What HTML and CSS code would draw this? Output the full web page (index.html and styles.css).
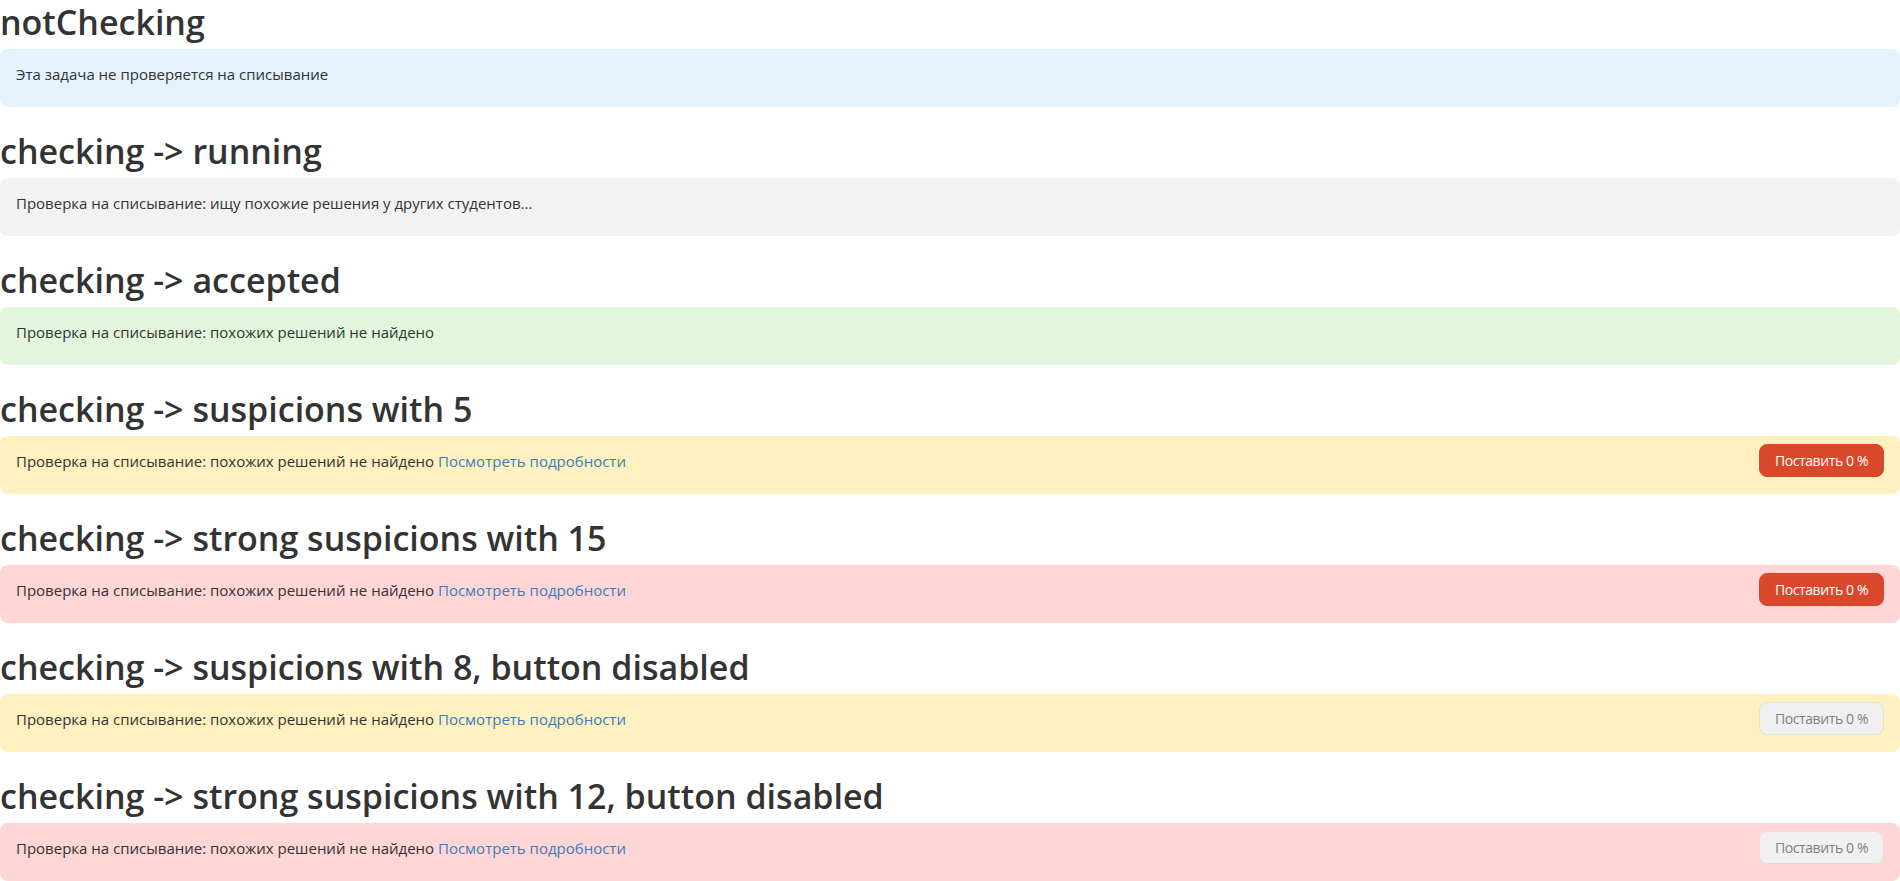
FILE: index.html
```html
<!DOCTYPE html>
<html lang="ru">
<head>
<meta charset="utf-8">
<title>Anti-plagiarism states</title>
<link rel="stylesheet" href="styles.css">
</head>
<body>
<main class="page">
  <section class="case">
    <h1 class="case-title">notChecking</h1>
    <div class="alert alert-info">
      <span class="alert-text">Эта задача не проверяется на списывание</span>
    </div>
  </section>
  <section class="case">
    <h1 class="case-title">checking -&gt; running</h1>
    <div class="alert alert-running">
      <span class="alert-text">Проверка на списывание: ищу похожие решения у других студентов...</span>
    </div>
  </section>
  <section class="case">
    <h1 class="case-title">checking -&gt; accepted</h1>
    <div class="alert alert-success">
      <span class="alert-text">Проверка на списывание: похожих решений не найдено</span>
    </div>
  </section>
  <section class="case">
    <h1 class="case-title">checking -&gt; suspicions with 5</h1>
    <div class="alert alert-warning">
      <span class="alert-text">Проверка на списывание: похожих решений не найдено <a class="alert-link" href="#">Посмотреть подробности</a></span>
      <button class="btn btn-danger" type="button">Поставить 0 %</button>
    </div>
  </section>
  <section class="case">
    <h1 class="case-title">checking -&gt; strong suspicions with 15</h1>
    <div class="alert alert-strong">
      <span class="alert-text">Проверка на списывание: похожих решений не найдено <a class="alert-link" href="#">Посмотреть подробности</a></span>
      <button class="btn btn-danger" type="button">Поставить 0 %</button>
    </div>
  </section>
  <section class="case">
    <h1 class="case-title">checking -&gt; suspicions with 8, button disabled</h1>
    <div class="alert alert-warning">
      <span class="alert-text">Проверка на списывание: похожих решений не найдено <a class="alert-link" href="#">Посмотреть подробности</a></span>
      <button class="btn btn-disabled" type="button" disabled>Поставить 0 %</button>
    </div>
  </section>
  <section class="case">
    <h1 class="case-title">checking -&gt; strong suspicions with 12, button disabled</h1>
    <div class="alert alert-strong">
      <span class="alert-text">Проверка на списывание: похожих решений не найдено <a class="alert-link" href="#">Посмотреть подробности</a></span>
      <button class="btn btn-disabled" type="button" disabled>Поставить 0 %</button>
    </div>
  </section>
</main>
</body>
</html>
```
FILE: styles.css
```css
html, body {
  margin: 0;
  padding: 0;
  background: #ffffff;
}

body {
  font-family: "Open Sans", "Noto Sans", sans-serif;
  color: #333333;
}

.page {
  display: flex;
  flex-direction: column;
  gap: 22px;
}

.case-title {
  margin: 0 0 4px 0;
  font-size: 34px;
  line-height: 45px;
  font-weight: 600;
  color: #333333;
  white-space: nowrap;
}

.alert {
  display: flex;
  align-items: center;
  justify-content: space-between;
  min-height: 33px;
  padding: 8px 16px 17px 16px;
  border-radius: 8px;
  font-size: 15px;
  line-height: 20px;
  color: #333333;
}

.alert-info { background: #e3f2fd; }
.alert-running { background: #f2f2f2; }
.alert-success { background: #e2f6dc; }
.alert-warning { background: #fff0c0; }
.alert-strong { background: #ffd6d6; }

.alert-link {
  color: #3a7dbf;
  text-decoration: none;
}

.btn {
  box-sizing: border-box;
  width: 125px;
  height: 33px;
  padding: 0;
  border-radius: 8px;
  border: 1px solid transparent;
  font-family: inherit;
  font-size: 14px;
  letter-spacing: -0.4px;
  line-height: 20px;
  text-align: center;
  cursor: pointer;
}

.btn-danger {
  background: #da482b;
  border-color: #da482b;
  color: #ffffff;
}

.btn-disabled {
  background: #f0f0f0;
  border-color: #e6e0d0;
  color: #808080;
  cursor: default;
}
```
